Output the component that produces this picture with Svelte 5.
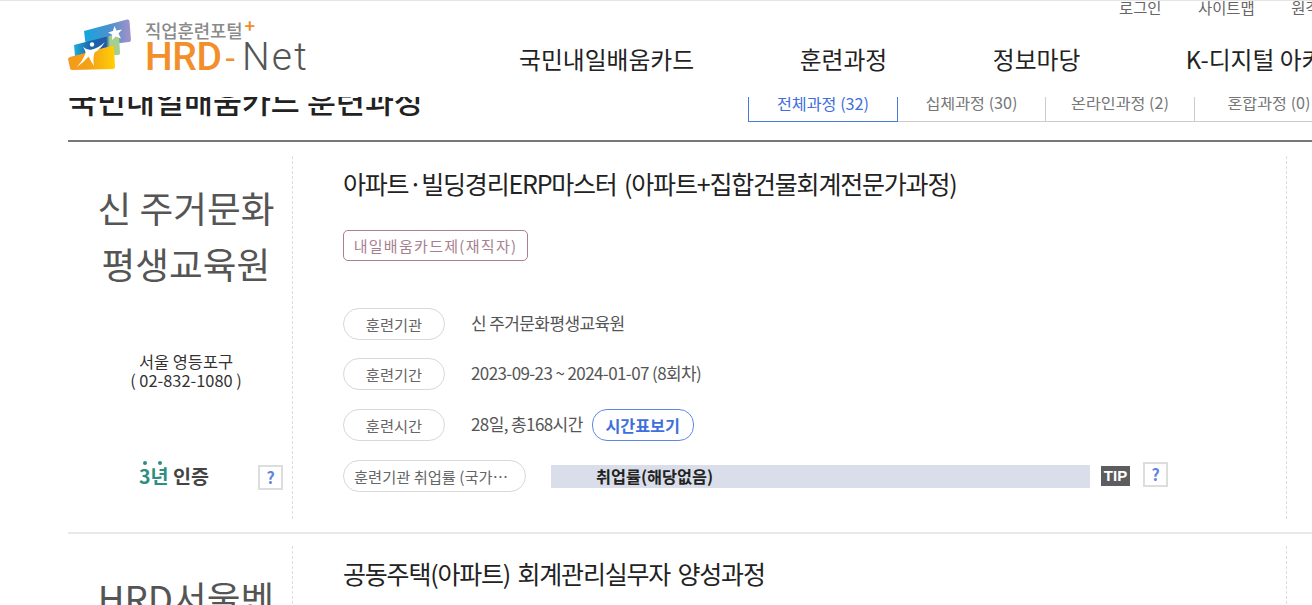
<script lang="ts">
  const tabs = [
    { label: '전체과정 (32)', active: true },
    { label: '집체과정 (30)', active: false },
    { label: '온라인과정 (2)', active: false },
    { label: '혼합과정 (0)', active: false }
  ];
  const nav = ['국민내일배움카드', '훈련과정', '정보마당', 'K-디지털 아카데미'];
  const util = ['로그인', '사이트맵', '원격지원'];
</script>

<div class="page">
  <header>
    <div class="util">
      {#each util as u}
        <span>{u}</span>
      {/each}
    </div>
    <div class="main-bar">
      <div class="logo">
        <svg class="mark" width="66" height="54" viewBox="68 19 66 54">
          <defs>
            <linearGradient id="back" x1="0" y1="0" x2="1" y2="0">
              <stop offset="0" stop-color="#14a5de" />
              <stop offset="0.55" stop-color="#4d90cf" />
              <stop offset="1" stop-color="#a592c8" />
            </linearGradient>
            <linearGradient id="mid" x1="0" y1="0" x2="1" y2="0">
              <stop offset="0" stop-color="#1fb0d8" />
              <stop offset="0.35" stop-color="#1c64ad" />
              <stop offset="0.7" stop-color="#1f5aa6" />
              <stop offset="0.78" stop-color="#a4cf8f" />
              <stop offset="1" stop-color="#a4cf8f" />
            </linearGradient>
            <linearGradient id="front" x1="0" y1="0" x2="1" y2="0">
              <stop offset="0" stop-color="#f49a1c" />
              <stop offset="0.45" stop-color="#f4a116" />
              <stop offset="1" stop-color="#ffcf06" />
            </linearGradient>
          </defs>
          <path d="M84 32 L127 20.5 Q129 20 129.5 22 L131 41 Q131 43 129 43 L86 48 Z" fill="url(#back)" />
          <path d="M74 46 L117 35 Q119 35 119 37 L120 54 Q120 56 118 56 L76 58 Q75 58 75 57 Z" fill="url(#mid)" />
          <path d="M68 60 Q68 59 70 58 L111 47 Q114 46 114 49 L115 68 Q115 70 113 70 L72 71 Q70 71 70 69 Z" fill="url(#front)" />
          <path d="M114.5 27 L116.5 31.5 L122 30.5 L118.5 34.5 L121 39.5 L115.8 37.5 L112 41 L112.2 35.8 L108 33.4 L113 32 Z" fill="#fff" />
          <circle cx="92" cy="45.5" r="2.2" fill="#fff" />
          <path d="M83 48 Q88 52 92 50.4 Q98 49.4 105 43 Q100 50.6 94.6 53.6 Q92.6 59 94 67 Q90.6 62 88.6 57.6 Q84 63 77 68 Q82.6 61.6 85.4 55 Q86 52 83 48 Z" fill="#fff" />
        </svg>
        <div class="wordmark">
          <span class="portal">직업훈련포털<b>+</b></span>
          <span class="brand"><b>HRD</b><i>-</i><span>Net</span></span>
        </div>
      </div>
      <nav>
        {#each nav as n}
          <span>{n}</span>
        {/each}
      </nav>
    </div>
  </header>

  <main>
    <div class="head">
      <h2>국민내일배움카드 훈련과정</h2>
      <ul class="tabs">
        {#each tabs as t}
          <li class:active={t.active}>{t.label}</li>
        {/each}
      </ul>
    </div>

    <article class="card">
      <div class="side">
        <div class="name">신 주거문화평생교육원</div>
        <div class="addr">서울 영등포구<br />( 02-832-1080 )</div>
        <div class="cert">
          <span class="grade"><em>3</em><em>년</em> <span>인증</span></span>
          <button class="help">?</button>
        </div>
      </div>
      <div class="body">
        <h3>아파트·빌딩경리ERP마스터 (아파트+집합건물회계전문가과정)</h3>
        <span class="tag">내일배움카드제(재직자)</span>
        <div class="rows">
          <div class="row">
            <span class="pill">훈련기관</span>
            <span class="val">신 주거문화평생교육원</span>
          </div>
          <div class="row">
            <span class="pill">훈련기간</span>
            <span class="val">2023-09-23 ~ 2024-01-07 (8회차)</span>
          </div>
          <div class="row">
            <span class="pill">훈련시간</span>
            <span class="val">28일, 총168시간</span>
            <button class="timetable">시간표보기</button>
          </div>
          <div class="row">
            <span class="pill wide"><span class="clip">훈련기관 취업률 (국가기술자격)</span></span>
            <div class="bar">취업률(해당없음)</div>
            <span class="tip">TIP</span>
            <button class="help small">?</button>
          </div>
        </div>
      </div>
    </article>

    <article class="card">
      <div class="side">
        <div class="name">HRD서울벤처평생교육원</div>
      </div>
      <div class="body">
        <h3>공동주택(아파트) 회계관리실무자 양성과정</h3>
      </div>
    </article>
  </main>
</div>

<style>
  :global(body) {
    margin: 0;
    background: #fff;
  }
  .page {
    width: 1312px;
    height: 605px;
    overflow: hidden;
    font-family: "Noto Sans CJK KR", "Noto Sans", sans-serif;
    color: #333;
    border-top: 1px solid #e6e6e6;
    box-sizing: border-box;
  }
  header {
    position: relative;
    z-index: 2;
    height: 96px;
    background: #fff;
    overflow: hidden;
    padding-left: 68px;
  }
  .util {
    display: flex;
    gap: 36.5px;
    margin-left: 1051px;
    margin-top: -7px;
    height: 27px;
    font-size: 15.4px;
    line-height: 26px;
    color: #666;
    white-space: nowrap;
  }
  .main-bar {
    display: flex;
    align-items: flex-start;
    white-space: nowrap;
  }
  .logo {
    display: flex;
    width: 451px;
    flex: none;
    margin-top: -2px;
  }
  .mark {
    display: block;
    flex: none;
    margin-top: -1px;
  }
  .wordmark {
    margin-left: 11px;
    display: flex;
    flex-direction: column;
  }
  .portal {
    font-size: 17.8px;
    line-height: 18px;
    color: #8a8a8a;
    font-weight: 500;
    margin-top: 2px;
    letter-spacing: -0.1px;
  }
  .portal b {
    color: #f28c28;
    position: relative;
    top: -5px;
    font-size: 18px;
    margin-left: 2px;
  }
  .brand {
    font-family: Roboto, "Liberation Sans", sans-serif;
    font-size: 39px;
    line-height: 37px;
    display: flex;
    align-items: baseline;
  }
  .brand b {
    color: #f28f2b;
    font-weight: 500;
    letter-spacing: -0.4px;
  }
  .brand i {
    color: #f28f2b;
    font-style: normal;
    font-weight: 400;
    font-size: 34px;
    margin: 0 7px 0 4px;
  }
  .brand span {
    color: #555;
    font-weight: 300;
    letter-spacing: 2.2px;
  }
  nav {
    display: flex;
    gap: 105.5px;
    font-size: 23.8px;
    line-height: 34px;
    margin-top: 21px;
    color: #222;
  }
  main {
    margin-top: -17px;
  }
  .head {
    display: flex;
    justify-content: space-between;
    align-items: flex-end;
    margin-left: 68px;
    margin-bottom: 14px;
    padding-bottom: 18px;
    border-bottom: 2px solid #777;
    width: 1300px;
    height: 42px;
  }
  h2 {
    margin: 0 0 3px;
    font-size: 31.5px;
    line-height: 40px;
    font-weight: 500;
    color: #222;
    white-space: nowrap;
  }
  .tabs {
    list-style: none;
    display: flex;
    margin: 0 25px 0 0;
    padding: 0;
    height: 42px;
  }
  .tabs li {
    width: 148px;
    box-sizing: border-box;
    border-bottom: 1px solid #ccc;
    border-right: 1px solid #ccc;
    text-align: center;
    font-size: 16.2px;
    line-height: 45px;
    color: #777;
    white-space: nowrap;
  }
  .tabs li.active {
    width: 150px;
    color: #3f6fdc;
    border: 1px solid #4a78e0;
  }
  .tabs li:nth-child(3) {
    width: 149px;
  }
  .tabs li:last-child {
    border-right: 0;
  }
  .card {
    display: flex;
    margin: 0 0 12px 68px;
    width: 1300px;
    padding: 0 0 13px;
    border-bottom: 2px solid #e9e9e9;
    height: 363px;
  }
  .side {
    width: 224px;
    flex: none;
    border-right: 1px dashed #ddd;
  }
  .name {
    width: 190px;
    margin: 23px 0 0 23px;
    font-size: 36.7px;
    line-height: 56px;
    text-align: center;
    color: #555;
  }
  .addr {
    margin-top: 61px;
    padding-left: 12px;
    font-size: 16.4px;
    line-height: 19px;
    text-align: center;
    color: #333;
  }
  .cert {
    margin-top: 75px;
    padding-left: 71px;
    display: flex;
    align-items: center;
    height: 25px;
  }
  .grade {
    font-size: 19.6px;
    font-weight: 700;
    width: 119px;
    flex: none;
    color: #444;
    line-height: 25px;
    margin-top: -5px;
    white-space: nowrap;
  }
  .grade em {
    font-style: normal;
    color: #2f8e82;
    position: relative;
  }
  .grade em::before {
    content: '';
    position: absolute;
    left: 50%;
    top: 0;
    width: 4px;
    height: 4px;
    margin-left: -2px;
    border-radius: 50%;
    background: #2f8e82;
  }
  .help {
    width: 25px;
    height: 25px;
    padding: 0;
    border: 2px solid #ddd;
    background: #fff;
    color: #5f84e2;
    font-family: inherit;
    font-size: 16px;
    font-weight: 700;
    line-height: 19px;
  }
  .body {
    width: 943px;
    flex: none;
    padding-left: 50px;
    border-right: 1px dashed #ddd;
  }
  h3 {
    margin: 9px 0 0;
    font-size: 25px;
    line-height: 36px;
    letter-spacing: -1.2px;
    word-spacing: 3px;
    font-weight: 400;
    font-feature-settings: "palt";
    color: #222;
    white-space: nowrap;
  }
  .tag {
    display: block;
    box-sizing: border-box;
    width: 185px;
    height: 31px;
    margin-top: 29px;
    border: 1px solid #ac7f90;
    border-radius: 5px;
    text-align: center;
    font-size: 15px;
    line-height: 29px;
    letter-spacing: 1.3px;
    color: #a67f90;
    white-space: nowrap;
  }
  .rows {
    display: flex;
    flex-direction: column;
    gap: 19px;
    margin-top: 47px;
  }
  .row {
    display: flex;
    align-items: center;
    height: 32px;
  }
  .row:first-child {
    margin-bottom: -1px;
  }
  .pill {
    box-sizing: border-box;
    width: 102px;
    height: 32px;
    border: 1px solid #d8d8d8;
    border-radius: 16px;
    text-align: center;
    font-size: 15.3px;
    line-height: 30px;
    color: #666;
    flex: none;
  }
  .pill.wide {
    width: 183px;
    padding: 0 10px;
  }
  .clip {
    display: block;
    overflow: hidden;
    white-space: nowrap;
    text-overflow: ellipsis;
  }
  .val {
    margin-left: 26px;
    padding-bottom: 3px;
    font-size: 17px;
    letter-spacing: -0.6px;
    color: #555;
    white-space: nowrap;
  }
  .timetable {
    margin-left: 9px;
    width: 102px;
    height: 32px;
    padding: 0;
    border: 1px solid #5f88e6;
    border-radius: 15px;
    background: #fff;
    color: #3f6fdc;
    font-family: inherit;
    font-size: 16.2px;
    font-weight: 700;
  }
  .bar {
    margin-left: 25px;
    width: 539px;
    box-sizing: border-box;
    height: 23px;
    padding-left: 45px;
    background: #d9deea;
    font-size: 16.3px;
    line-height: 23px;
    font-weight: 700;
    color: #222;
  }
  .tip {
    margin-left: 11px;
    width: 29px;
    height: 20px;
    background: #5d5d60;
    color: #fff;
    font-family: "Liberation Sans Narrow", "Liberation Sans", sans-serif;
    font-size: 15px;
    font-weight: 700;
    line-height: 20px;
    text-align: center;
  }
  .help.small {
    margin-left: 13px;
    margin-top: -4px;
  }
</style>
